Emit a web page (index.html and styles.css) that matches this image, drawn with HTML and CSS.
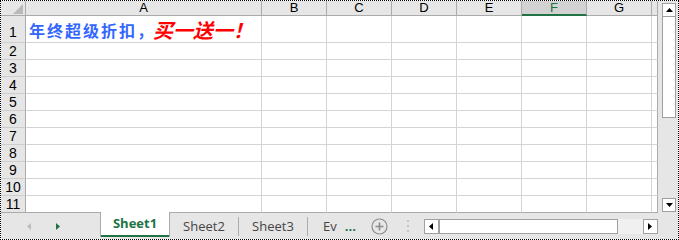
FILE: index.html
```html
<!DOCTYPE html>
<html>

<head>
    <title>Sheet1</title>
    <link rel="stylesheet" href="styles.css">
</head>

<body>
    <div class="frame">
        <div class="book">
            <div class="sheet">
                <div class="corner"><span class="tri"></span></div>
                <div class="hd">A</div>
                <div class="hd">B</div>
                <div class="hd">C</div>
                <div class="hd">D</div>
                <div class="hd">E</div>
                <div class="hd sel">F</div>
                <div class="hd">G</div>
                <div class="hd edge"></div>

                <div class="rh first">1</div>
                <div class="c a1"><span class="blue">年终超级折扣，</span><span class="red">买一送一！</span></div>
                <div class="c"></div><div class="c"></div><div class="c"></div><div class="c"></div><div class="c"></div><div class="c"></div><div class="c edge"></div>

                <div class="rh">2</div>
                <div class="c"></div><div class="c"></div><div class="c"></div><div class="c"></div><div class="c"></div><div class="c"></div><div class="c"></div><div class="c edge"></div>
                <div class="rh">3</div>
                <div class="c"></div><div class="c"></div><div class="c"></div><div class="c"></div><div class="c"></div><div class="c"></div><div class="c"></div><div class="c edge"></div>
                <div class="rh">4</div>
                <div class="c"></div><div class="c"></div><div class="c"></div><div class="c"></div><div class="c"></div><div class="c"></div><div class="c"></div><div class="c edge"></div>
                <div class="rh">5</div>
                <div class="c"></div><div class="c"></div><div class="c"></div><div class="c"></div><div class="c"></div><div class="c"></div><div class="c"></div><div class="c edge"></div>
                <div class="rh">6</div>
                <div class="c"></div><div class="c"></div><div class="c"></div><div class="c"></div><div class="c"></div><div class="c"></div><div class="c"></div><div class="c edge"></div>
                <div class="rh">7</div>
                <div class="c"></div><div class="c"></div><div class="c"></div><div class="c"></div><div class="c"></div><div class="c"></div><div class="c"></div><div class="c edge"></div>
                <div class="rh">8</div>
                <div class="c"></div><div class="c"></div><div class="c"></div><div class="c"></div><div class="c"></div><div class="c"></div><div class="c"></div><div class="c edge"></div>
                <div class="rh">9</div>
                <div class="c"></div><div class="c"></div><div class="c"></div><div class="c"></div><div class="c"></div><div class="c"></div><div class="c"></div><div class="c edge"></div>
                <div class="rh">10</div>
                <div class="c"></div><div class="c"></div><div class="c"></div><div class="c"></div><div class="c"></div><div class="c"></div><div class="c"></div><div class="c edge"></div>
                <div class="rh">11</div>
                <div class="c"></div><div class="c"></div><div class="c"></div><div class="c"></div><div class="c"></div><div class="c"></div><div class="c"></div><div class="c edge"></div>
            </div>

            <div class="tabbar">
                <div class="nav">
                    <svg width="4" height="7" viewBox="0 0 4 7"><path d="M4 0V7L0 3.5Z" fill="#bdbdbd"/></svg>
                    <svg width="4" height="7" viewBox="0 0 4 7"><path d="M0 0V7L4 3.5Z" fill="#217346"/></svg>
                </div>
                <div class="tab active">Sheet1</div>
                <div class="tab">Sheet2</div>
                <span class="sep"></span>
                <div class="tab">Sheet3</div>
                <span class="sep"></span>
                <div class="tab ev">Ev<b>...</b></div>
                <svg class="add" width="17" height="17" viewBox="0 0 17 17">
                    <circle cx="8.5" cy="8.5" r="7.5" fill="none" stroke="#8c8c8c" stroke-width="1.2"/>
                    <path d="M8.5 4.5V12.5M4.5 8.5H12.5" stroke="#8c8c8c" stroke-width="1.6"/>
                </svg>
                <span class="vdots"><i></i><i></i><i></i></span>
                <div class="hscroll">
                    <span class="btn"><svg width="4" height="7" viewBox="0 0 4 7"><path d="M4 0V7L0 3.5Z" fill="#000"/></svg></span>
                    <span class="thumb"></span>
                    <span class="track"></span>
                    <span class="btn"><svg width="4" height="7" viewBox="0 0 4 7"><path d="M0 0V7L4 3.5Z" fill="#000"/></svg></span>
                </div>
            </div>
        </div>

        <div class="vscroll">
            <span class="btn"><svg width="7" height="4" viewBox="0 0 7 4"><path d="M0 4H7L3.5 0Z" fill="#000"/></svg></span>
            <span class="thumb"></span>
            <span class="btn down"><svg width="7" height="4" viewBox="0 0 7 4"><path d="M0 0H7L3.5 4Z" fill="#000"/></svg></span>
        </div>
    </div>
</body>

</html>
```

FILE: styles.css
```css
body {
    margin: 0;
    background-color: #fff;
    font-family: "Liberation Sans", Arial, sans-serif;
}

.frame {
    width: 679px;
    height: 240px;
    box-sizing: border-box;
    border: 1px dotted #000;
    display: flex;
}

.book {
    width: 657px;
    display: flex;
    flex-direction: column;
}

/* grid */
.sheet {
    display: grid;
    grid-template-columns: 25px 236px repeat(6, 65px) 6px;
    grid-template-rows: 15px 27px repeat(10, 17px);
}

.sheet > div {
    box-sizing: border-box;
    border-right: 1px solid #d4d4d4;
    border-bottom: 1px solid #d4d4d4;
}

.sheet > div:nth-last-child(-n+9) {
    border-bottom-color: #ababab;
}

.corner,
.hd,
.rh {
    background-color: #e6e6e6;
}

.sheet > .corner,
.sheet > .hd {
    border-right-color: #ababab;
    border-bottom-color: #ababab;
}

.corner {
    display: flex;
    justify-content: flex-end;
    align-items: flex-end;
    padding: 0 2px 1px 0;
}

.tri {
    width: 0;
    height: 0;
    border-left: 10px solid transparent;
    border-bottom: 10px solid #b9b9b9;
}

.hd {
    font-size: 13px;
    line-height: 14px;
    text-align: center;
    color: #000;
}

.sheet > .hd.sel {
    background-color: #d2d2d2;
    border-bottom: 2px solid #217346;
    color: #217346;
}

.rh {
    font-size: 14px;
    line-height: 16px;
    text-align: center;
    display: flex;
    align-items: flex-end;
    justify-content: center;
}

.sheet > .rh {
    border-right-color: #ababab;
    border-bottom-color: #cdcdcd;
}

.rh.first {
    padding-bottom: 2px;
}

.sheet > .edge {
    border-right-color: #ababab;
}

.a1 {
    display: flex;
    align-items: flex-end;
    padding: 0 0 2px 3px;
    white-space: nowrap;
    font-family: "Noto Sans CJK SC", sans-serif;
    font-weight: bold;
    line-height: 20px;
}

.blue {
    color: #3366ff;
    font-size: 16px;
    letter-spacing: 2px;
    margin-right: -2px;
}

.red {
    color: #ff0000;
    font-size: 20px;
    font-style: italic;
}

/* sheet tabs */
.tabbar {
    height: 26px;
    display: flex;
    align-items: center;
    background-color: #e6e6e6;
    font-family: "Open Sans", sans-serif;
    font-size: 13px;
    color: #444;
}

.nav {
    width: 99px;
    display: flex;
    gap: 25px;
    padding-left: 26px;
    box-sizing: border-box;
}

.tab {
    width: 68px;
    text-align: center;
}

.tab.active {
    width: 70px;
    height: 25px;
    align-self: flex-start;
    margin-top: -1px;
    box-sizing: border-box;
    background-color: #fff;
    border-left: 1px solid #ababab;
    border-right: 1px solid #ababab;
    box-shadow: inset 0 -2px 0 #217346;
    color: #217346;
    font-weight: bold;
    line-height: 23px;
}

.sep {
    width: 1px;
    height: 19px;
    background-color: #ababab;
}

.tab.ev {
    width: auto;
    padding-left: 15px;
    text-align: left;
}

.tab.ev b {
    color: #217346;
    margin-left: 8px;
}

.add {
    margin-left: 15px;
}

.vdots {
    display: flex;
    flex-direction: column;
    gap: 3px;
    margin-left: 19px;
}

.vdots i {
    width: 2px;
    height: 2px;
    background-color: #c4c4c4;
}

.hscroll {
    margin-left: 15px;
    display: flex;
    height: 15px;
}

.hscroll .btn,
.vscroll .btn {
    width: 15px;
    height: 15px;
    box-sizing: border-box;
    border: 1px solid #a0a0a0;
    background-color: #fff;
    display: flex;
    align-items: center;
    justify-content: center;
}

.hscroll .thumb {
    width: 179px;
    box-sizing: border-box;
    border: 1px solid #a0a0a0;
    background-color: #fff;
}

.hscroll .track {
    width: 25px;
    background-color: #f0f0f0;
}

/* vertical scrollbar */
.vscroll {
    width: 20px;
    background-color: #e6e6e6;
    display: flex;
    flex-direction: column;
    padding: 2px 2px 27px 4px;
    box-sizing: border-box;
}

.vscroll .btn {
    width: 14px;
    height: 14px;
}

.vscroll .thumb {
    height: 101px;
    box-sizing: border-box;
    border: 1px solid #a0a0a0;
    border-top: none;
    background-color: #fff;
}

.vscroll .down {
    margin-top: auto;
}
```
